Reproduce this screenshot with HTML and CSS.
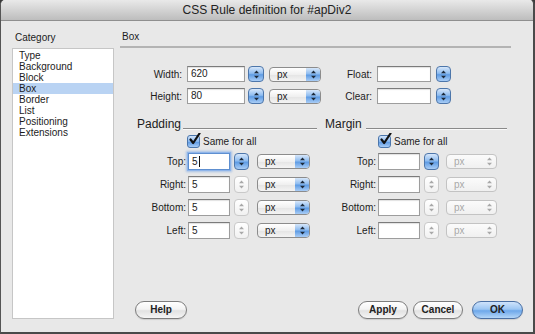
FILE: index.html
```html
<!DOCTYPE html>
<html>
<head>
<meta charset="utf-8">
<link rel="stylesheet" href="styles.css">
</head>
<body>
<div class="window">
  <div class="titlebar">CSS Rule definition for #apDiv2</div>
  <div class="content">
    <div class="sidebar">
      <div class="cat-label">Category</div>
      <ul class="cat-list">
        <li>Type</li>
        <li>Background</li>
        <li>Block</li>
        <li class="sel-item">Box</li>
        <li>Border</li>
        <li>List</li>
        <li>Positioning</li>
        <li>Extensions</li>
      </ul>
    </div>
    <div class="main">
      <div class="hdr">Box</div>
      <div class="top-rows">
        <div class="trow">
          <span class="lbl lw">Width:</span>
          <span class="inp iw">620</span>
          <span class="step on s1"><svg width="7" height="9" viewBox="0 0 7 9"><path d="M3.5 0.5 L6 3.3 H1 Z M3.5 8.5 L6 5.7 H1 Z" fill="#1d2a3a"/></svg></span>
          <span class="pop pw"><span class="ptxt">px</span><span class="parr"><svg width="7" height="9" viewBox="0 0 7 9"><path d="M3.5 0.5 L6 3.3 H1 Z M3.5 8.5 L6 5.7 H1 Z" fill="#1d2a3a"/></svg></span></span>
          <span class="lbl lf">Float:</span>
          <span class="inp if"></span>
          <span class="step on s2"><svg width="7" height="9" viewBox="0 0 7 9"><path d="M3.5 0.5 L6 3.3 H1 Z M3.5 8.5 L6 5.7 H1 Z" fill="#1d2a3a"/></svg></span>
        </div>
        <div class="trow">
          <span class="lbl lw">Height:</span>
          <span class="inp iw">80</span>
          <span class="step on s1"><svg width="7" height="9" viewBox="0 0 7 9"><path d="M3.5 0.5 L6 3.3 H1 Z M3.5 8.5 L6 5.7 H1 Z" fill="#1d2a3a"/></svg></span>
          <span class="pop pw"><span class="ptxt">px</span><span class="parr"><svg width="7" height="9" viewBox="0 0 7 9"><path d="M3.5 0.5 L6 3.3 H1 Z M3.5 8.5 L6 5.7 H1 Z" fill="#1d2a3a"/></svg></span></span>
          <span class="lbl lf">Clear:</span>
          <span class="inp if"></span>
          <span class="step on s2"><svg width="7" height="9" viewBox="0 0 7 9"><path d="M3.5 0.5 L6 3.3 H1 Z M3.5 8.5 L6 5.7 H1 Z" fill="#1d2a3a"/></svg></span>
        </div>
      </div>

      <div class="groups">
        <div class="group pad">
          <div class="ghead"><span class="gtitle">Padding</span><span class="gline"></span></div>
          <div class="same"><span class="chk"><svg width="13" height="13" viewBox="0 0 13 13"><path d="M2.5 6.5 L5.2 10 L11.5 0.5" fill="none" stroke="#111" stroke-width="2.2" stroke-linecap="round" stroke-linejoin="round"/></svg></span>Same for all</div>
          <div class="frow">
            <span class="lbl gl">Top:</span>
            <span class="inp gi focus">5<span class="caret"></span></span>
            <span class="step on gs"><svg width="7" height="9" viewBox="0 0 7 9"><path d="M3.5 0.5 L6 3.3 H1 Z M3.5 8.5 L6 5.7 H1 Z" fill="#1d2a3a"/></svg></span>
            <span class="pop gp"><span class="ptxt">px</span><span class="parr"><svg width="7" height="9" viewBox="0 0 7 9"><path d="M3.5 0.5 L6 3.3 H1 Z M3.5 8.5 L6 5.7 H1 Z" fill="#1d2a3a"/></svg></span></span>
          </div>
          <div class="frow">
            <span class="lbl gl">Right:</span>
            <span class="inp gi">5</span>
            <span class="step off gs"><svg width="7" height="9" viewBox="0 0 7 9"><path d="M3.5 0.5 L6 3.3 H1 Z M3.5 8.5 L6 5.7 H1 Z" fill="#a9a9a9"/></svg></span>
            <span class="pop gp"><span class="ptxt">px</span><span class="parr"><svg width="7" height="9" viewBox="0 0 7 9"><path d="M3.5 0.5 L6 3.3 H1 Z M3.5 8.5 L6 5.7 H1 Z" fill="#1d2a3a"/></svg></span></span>
          </div>
          <div class="frow">
            <span class="lbl gl">Bottom:</span>
            <span class="inp gi">5</span>
            <span class="step off gs"><svg width="7" height="9" viewBox="0 0 7 9"><path d="M3.5 0.5 L6 3.3 H1 Z M3.5 8.5 L6 5.7 H1 Z" fill="#a9a9a9"/></svg></span>
            <span class="pop gp"><span class="ptxt">px</span><span class="parr"><svg width="7" height="9" viewBox="0 0 7 9"><path d="M3.5 0.5 L6 3.3 H1 Z M3.5 8.5 L6 5.7 H1 Z" fill="#1d2a3a"/></svg></span></span>
          </div>
          <div class="frow">
            <span class="lbl gl">Left:</span>
            <span class="inp gi">5</span>
            <span class="step off gs"><svg width="7" height="9" viewBox="0 0 7 9"><path d="M3.5 0.5 L6 3.3 H1 Z M3.5 8.5 L6 5.7 H1 Z" fill="#a9a9a9"/></svg></span>
            <span class="pop gp"><span class="ptxt">px</span><span class="parr"><svg width="7" height="9" viewBox="0 0 7 9"><path d="M3.5 0.5 L6 3.3 H1 Z M3.5 8.5 L6 5.7 H1 Z" fill="#1d2a3a"/></svg></span></span>
          </div>
        </div>

        <div class="group mar">
          <div class="ghead"><span class="gtitle">Margin</span><span class="gline"></span></div>
          <div class="same"><span class="chk"><svg width="13" height="13" viewBox="0 0 13 13"><path d="M2.5 6.5 L5.2 10 L11.5 0.5" fill="none" stroke="#111" stroke-width="2.2" stroke-linecap="round" stroke-linejoin="round"/></svg></span>Same for all</div>
          <div class="frow">
            <span class="lbl ml">Top:</span>
            <span class="inp gi"></span>
            <span class="step on gs"><svg width="7" height="9" viewBox="0 0 7 9"><path d="M3.5 0.5 L6 3.3 H1 Z M3.5 8.5 L6 5.7 H1 Z" fill="#1d2a3a"/></svg></span>
            <span class="pop mp dis"><span class="ptxt">px</span><span class="parr"><svg width="7" height="9" viewBox="0 0 7 9"><path d="M3.5 0.5 L6 3.3 H1 Z M3.5 8.5 L6 5.7 H1 Z" fill="#a9a9a9"/></svg></span></span>
          </div>
          <div class="frow">
            <span class="lbl ml">Right:</span>
            <span class="inp gi"></span>
            <span class="step off gs"><svg width="7" height="9" viewBox="0 0 7 9"><path d="M3.5 0.5 L6 3.3 H1 Z M3.5 8.5 L6 5.7 H1 Z" fill="#a9a9a9"/></svg></span>
            <span class="pop mp dis"><span class="ptxt">px</span><span class="parr"><svg width="7" height="9" viewBox="0 0 7 9"><path d="M3.5 0.5 L6 3.3 H1 Z M3.5 8.5 L6 5.7 H1 Z" fill="#a9a9a9"/></svg></span></span>
          </div>
          <div class="frow">
            <span class="lbl ml">Bottom:</span>
            <span class="inp gi"></span>
            <span class="step off gs"><svg width="7" height="9" viewBox="0 0 7 9"><path d="M3.5 0.5 L6 3.3 H1 Z M3.5 8.5 L6 5.7 H1 Z" fill="#a9a9a9"/></svg></span>
            <span class="pop mp dis"><span class="ptxt">px</span><span class="parr"><svg width="7" height="9" viewBox="0 0 7 9"><path d="M3.5 0.5 L6 3.3 H1 Z M3.5 8.5 L6 5.7 H1 Z" fill="#a9a9a9"/></svg></span></span>
          </div>
          <div class="frow">
            <span class="lbl ml">Left:</span>
            <span class="inp gi"></span>
            <span class="step off gs"><svg width="7" height="9" viewBox="0 0 7 9"><path d="M3.5 0.5 L6 3.3 H1 Z M3.5 8.5 L6 5.7 H1 Z" fill="#a9a9a9"/></svg></span>
            <span class="pop mp dis"><span class="ptxt">px</span><span class="parr"><svg width="7" height="9" viewBox="0 0 7 9"><path d="M3.5 0.5 L6 3.3 H1 Z M3.5 8.5 L6 5.7 H1 Z" fill="#a9a9a9"/></svg></span></span>
          </div>
        </div>
      </div>

      <div class="footer">
        <span class="btn help">Help</span>
        <span class="spacer"></span>
        <span class="btn apply">Apply</span>
        <span class="btn cancel">Cancel</span>
        <span class="btn ok">OK</span>
      </div>
    </div>
  </div>
</div>
</body>
</html>
```
FILE: styles.css
```css
* { box-sizing: border-box; }
html, body { margin: 0; padding: 0; background: #3a3a3a; }
body { width: 535px; height: 334px; overflow: hidden; font-family: "Liberation Sans", Arial, sans-serif; font-size: 10px; color: #1c1c1c; }

.window {
  width: 535px; height: 334px;
  background: #e8e8e8;
  border-left: 1px solid #555;
  border-right: 2px solid #4a4a4a;
  border-bottom: 2px solid #4a4a4a;
  border-radius: 5px 5px 0 0;
  overflow: hidden;
  display: flex; flex-direction: column;
}
.titlebar {
  height: 21px; flex: none;
  background: linear-gradient(#e9e9e9, #d3d3d3 50%, #bdbdbd);
  border-bottom: 1px solid #8f8f8f;
  text-align: center;
  font-size: 12px; line-height: 21px; color: #222;
}
.content {
  flex: 1;
  display: flex;
  padding: 0 10px 13px 11px;
}
.sidebar { width: 102px; display: flex; flex-direction: column; }
.cat-label { padding: 11px 0 0 3px; height: 27px; line-height: 12px; font-size: 10px; }
.cat-list {
  flex: 1; margin: 0; padding: 1px 0 0; list-style: none;
  background: #fff;
  border: 1px solid #c6c6c6;
}
.cat-list li { height: 11px; line-height: 11px; padding-left: 6px; font-size: 10px; }
.cat-list li.sel-item { background: #b9d3f3; }

.main { flex: 1; margin-left: 6px; display: flex; flex-direction: column; }
.hdr {
  margin-right: 12px;
  padding: 10px 0 3px 2px;
  line-height: 12px; font-size: 10px;
  border-bottom: 2px solid #b3b3b3;
}

.top-rows { margin-top: 18px; display: flex; flex-direction: column; gap: 6px; }
.trow { display: flex; align-items: center; height: 16px; }
.lbl { text-align: right; flex: none; }
.lw { width: 62px; }
.lf { width: 51px; margin-left: 0; }

.inp {
  flex: none;
  height: 16px;
  background: #fff;
  border: 1px solid #9d9d9d;
  border-top-color: #7b7b7b;
  box-shadow: inset 0 1px 1px rgba(0,0,0,0.12);
  padding-left: 3px;
  line-height: 14px;
  font-size: 10px;
  display: flex; align-items: center;
}
.iw { width: 58px; margin-left: 5px; }
.if { width: 54px; margin-left: 5px; }

.step {
  flex: none;
  width: 16px; height: 16px;
  border-radius: 4px;
  display: flex; align-items: center; justify-content: center;
}
.step.on {
  background: linear-gradient(#d7e7fa, #8ebcf0 45%, #5f9ce4 55%, #a9cdf6);
  border: 1px solid #4d76aa;
}
.step.off {
  background: linear-gradient(#ffffff, #f1f1f1);
  border: 1px solid #c9c9c9;
}
.s1 { margin-left: 3px; }
.s2 { margin-left: 5px; width: 15px; }

.pop {
  flex: none;
  height: 15px;
  border: 1px solid #8c8c8c;
  border-radius: 4px;
  background: linear-gradient(#ffffff, #f0f0f0 50%, #e4e4e4 51%, #f4f4f4);
  display: flex; align-items: stretch;
  overflow: hidden;
}
.ptxt { flex: 1; padding-left: 7px; line-height: 13px; font-size: 10px; }
.parr {
  width: 14px;
  background: linear-gradient(#d7e7fa, #8ebcf0 45%, #5f9ce4 55%, #a9cdf6);
  display: flex; align-items: center; justify-content: center;
}
.pop.dis { border-color: #c3c3c3; background: linear-gradient(#fbfbfb, #f0f0f0); }
.pop.dis .ptxt { color: #a8a8a8; }
.pop.dis .parr { background: none; }
.pw { width: 52px; margin-left: 5px; }

.groups { margin-top: 13px; display: flex; padding-left: 17px; }
.group { display: flex; flex-direction: column; }
.pad { width: 180px; }
.mar { width: 182px; margin-left: 8px; }
.ghead { display: flex; align-items: flex-end; height: 14px; }
.gtitle { font-size: 12px; line-height: 14px; }
.gline { flex: 1; margin-left: 3px; margin-bottom: 2px; border-bottom: 1px solid #8a8a8a; box-shadow: 0 1px 0 #fafafa; }
.pad .gline { margin-left: 2px; }
.mar .gline { margin-left: 4px; }

.same { display: flex; align-items: center; height: 14px; margin-top: 3px; font-size: 10px; }
.pad .same { padding-left: 50px; }
.mar .same { padding-left: 53px; }
.chk {
  width: 13px; height: 13px; margin-right: 3px;
  border: 1px solid #4b76ac; border-radius: 3px;
  background: linear-gradient(#d2e4fa, #86b6ef 50%, #5d99e2 55%, #a6cbf5);
  position: relative;
}
.chk svg { position: absolute; left: 0; top: -3px; }

.frow { display: flex; align-items: center; height: 17px; margin-top: 6px; }
.same + .frow { margin-top: 5px; }
.gl { width: 49px; }
.ml { width: 51px; }
.gi { width: 42px; height: 17px; margin-left: 2px; }
.gs { margin-left: 4px; width: 15px; height: 17px; }
.gp { width: 53px; margin-left: 8px; }
.mp { width: 51px; margin-left: 7px; }
.inp.focus {
  border: 1px solid #5e8fd0;
  box-shadow: 0 0 0 1px #8fb5ea, 0 0 2px 2px rgba(110,160,230,0.55);
}
.caret { display: inline-block; width: 1px; height: 11px; background: #111; margin-left: 1px; }

.footer { margin-top: auto; display: flex; align-items: center; height: 18px; padding-left: 15px; }
.spacer { flex: 1; }
.btn {
  height: 18px; line-height: 16px;
  border: 1px solid #7d7d7d;
  border-radius: 9px;
  background: linear-gradient(#ffffff, #f3f3f3 45%, #e2e2e2 55%, #f5f5f5);
  text-align: center;
  font-size: 10px; font-weight: bold; color: #222;
  box-shadow: 0 1px 1px rgba(0,0,0,0.12);
}
.help { width: 52px; }
.apply { width: 50px; }
.cancel { width: 50px; margin-left: 5px; }
.ok {
  width: 51px; margin-left: 9px;
  border-color: #4a6fa3;
  background: linear-gradient(#cfe3fb, #9cc6f3 45%, #6ea8ea 55%, #b4d6f8);
}
```
